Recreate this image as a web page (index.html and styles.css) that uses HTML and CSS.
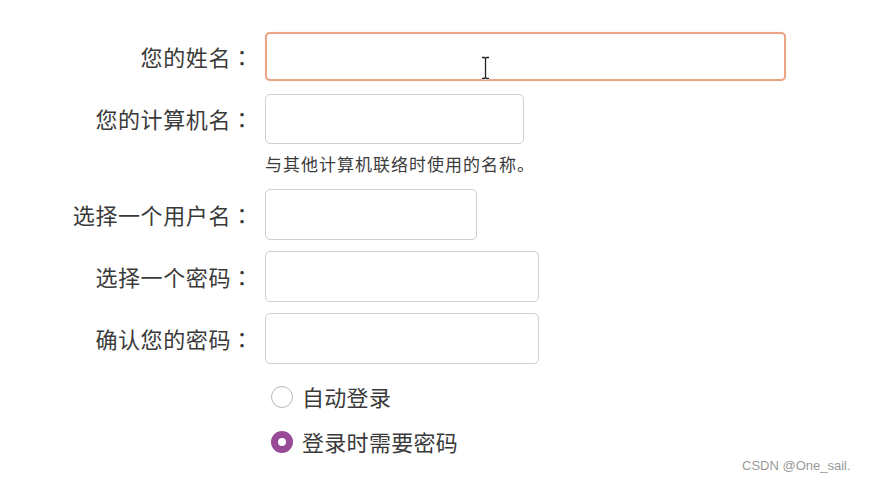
FILE: index.html
```html
<!DOCTYPE html>
<html lang="zh-CN">
<head>
<meta charset="utf-8">
<title>用户信息</title>
<link rel="stylesheet" href="styles.css">
</head>
<body>
<div class="form">
  <div class="row r1">
    <label class="label">您的姓名<span class="colon" lang="zh-TW">：</span></label>
    <div class="field w-full focus"></div>
  </div>
  <div class="row r2">
    <label class="label">您的计算机名<span class="colon" lang="zh-TW">：</span></label>
    <div class="field w-mid"></div>
  </div>
  <div class="hint">与其他计算机联络时使用的名称。</div>
  <div class="row r3">
    <label class="label">选择一个用户名<span class="colon" lang="zh-TW">：</span></label>
    <div class="field w-small"></div>
  </div>
  <div class="row r4">
    <label class="label">选择一个密码<span class="colon" lang="zh-TW">：</span></label>
    <div class="field w-pass"></div>
  </div>
  <div class="row r5">
    <label class="label">确认您的密码<span class="colon" lang="zh-TW">：</span></label>
    <div class="field w-pass"></div>
  </div>
  <div class="radio-row rr1">
    <span class="radio"></span>
    <span class="radio-text">自动登录</span>
  </div>
  <div class="radio-row rr2">
    <span class="radio checked"></span>
    <span class="radio-text">登录时需要密码</span>
  </div>
</div>
<svg class="ibeam" width="9" height="24" viewBox="0 0 9 24">
  <path d="M1 1.5 H3.5 L4.5 2.5 L5.5 1.5 H8 M4.5 2.5 V21.5 M1 22.5 H3.5 L4.5 21.5 L5.5 22.5 H8" fill="none" stroke="#fff" stroke-width="3"/>
  <path d="M1 1.5 H3.5 L4.5 2.5 L5.5 1.5 H8 M4.5 2.5 V21.5 M1 22.5 H3.5 L4.5 21.5 L5.5 22.5 H8" fill="none" stroke="#222" stroke-width="1.3"/>
</svg>
<div class="watermark">CSDN @One_sail.</div>
</body>
</html>
```

FILE: styles.css
```css
html, body {
  margin: 0;
  padding: 0;
  background: #ffffff;
}
body {
  width: 878px;
  height: 483px;
  position: relative;
  overflow: hidden;
  font-family: "Noto Sans CJK SC", "Noto Sans", sans-serif;
  color: #3a3a3a;
}
.form {
  display: flex;
  flex-direction: column;
  padding-top: 32px;
}
.row {
  display: flex;
  align-items: center;
  gap: 12px;
}
.label {
  width: 253px;
  text-align: right;
  font-size: 22px;
  letter-spacing: 0.6px;
  line-height: 30px;
  padding-bottom: 2px;
  white-space: nowrap;
}
.colon {
  font-family: "Noto Sans CJK TC", "Noto Sans CJK SC", sans-serif;
  letter-spacing: 0;
}
.field {
  height: 50px;
  box-sizing: border-box;
  border: 1.5px solid #cfcfcf;
  border-radius: 5px;
  background: #fff;
}
.field.focus {
  border: 2px solid #e9a586;
  box-shadow: 0 0 1px #f0c0a8;
  height: 49px;
}
.w-full { width: 521px; }
.w-mid { width: 259px; }
.w-small { width: 212px; }
.w-pass { width: 274px; }
.r2 { margin-top: 13px; }
.hint {
  margin-top: 8px;
  margin-left: 265px;
  font-size: 17px;
  letter-spacing: 1px;
  line-height: 24px;
  color: #3c3c3c;
}
.r3 { margin-top: 13px; }
.r3 .field { height: 51px; }
.r4 { margin-top: 11px; }
.r5 { margin-top: 11px; }
.r4 .field, .r5 .field { height: 51px; }
.radio-row {
  display: flex;
  align-items: center;
  gap: 9px;
  margin-left: 271px;
  height: 30px;
}
.rr1 { margin-top: 18px; }
.rr2 { margin-top: 15px; }
.radio {
  width: 22px;
  height: 22px;
  box-sizing: border-box;
  border-radius: 50%;
  border: 1.5px solid #b8b8b8;
  background: #fff;
}
.radio.checked {
  border: 7px solid #974a98;
  background: #fff;
}
.radio-text {
  font-size: 22px;
  letter-spacing: 0.3px;
  line-height: 30px;
  padding-bottom: 2px;
}
.ibeam {
  position: absolute;
  left: 481px;
  top: 56px;
}
.watermark {
  position: absolute;
  left: 742px;
  top: 457px;
  font-family: "Liberation Sans", Arial, sans-serif;
  font-size: 13px;
  line-height: 18px;
  color: #9a9a9a;
}
```
